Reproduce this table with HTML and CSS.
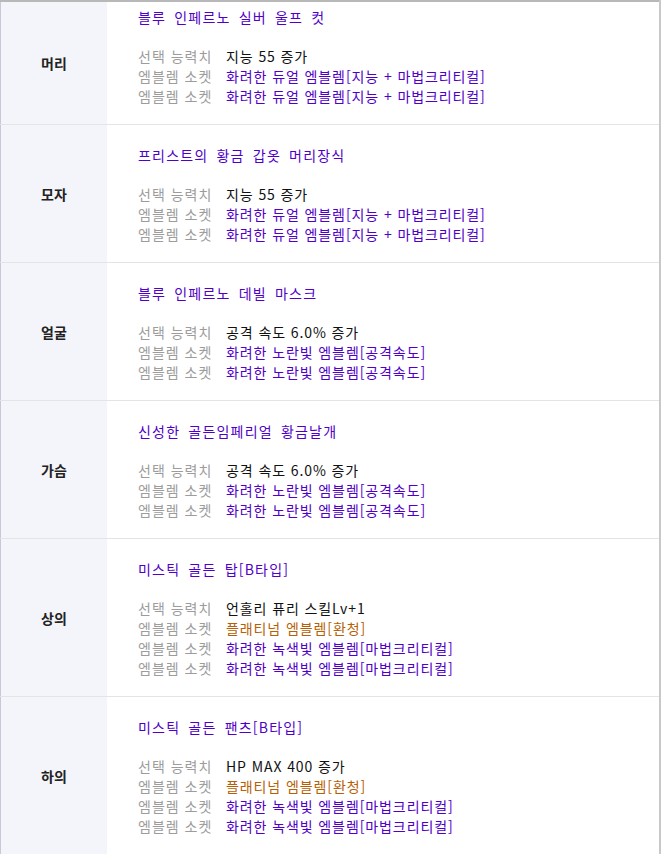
FILE: index.html
```html
<!DOCTYPE html>
<html lang="ko">
<head>
    <meta charset="UTF-8">
    <title>장비 옵션</title>
    <link rel="stylesheet" href="styles.css">
</head>
<body>
    <table class="equip">
        <tr class="first">
            <th>머리</th>
            <td>
                <div class="name">블루 인페르노 실버 울프 컷</div>
                <div class="opt"><span class="key">선택 능력치</span><span class="val">지능 55 증가</span></div>
                <div class="opt"><span class="key">엠블렘 소켓</span><span class="val purple">화려한 듀얼 엠블렘[지능 + 마법크리티컬]</span></div>
                <div class="opt"><span class="key">엠블렘 소켓</span><span class="val purple">화려한 듀얼 엠블렘[지능 + 마법크리티컬]</span></div>
            </td>
        </tr>
        <tr>
            <th>모자</th>
            <td>
                <div class="name">프리스트의 황금 갑옷 머리장식</div>
                <div class="opt"><span class="key">선택 능력치</span><span class="val">지능 55 증가</span></div>
                <div class="opt"><span class="key">엠블렘 소켓</span><span class="val purple">화려한 듀얼 엠블렘[지능 + 마법크리티컬]</span></div>
                <div class="opt"><span class="key">엠블렘 소켓</span><span class="val purple">화려한 듀얼 엠블렘[지능 + 마법크리티컬]</span></div>
            </td>
        </tr>
        <tr>
            <th>얼굴</th>
            <td>
                <div class="name">블루 인페르노 데빌 마스크</div>
                <div class="opt"><span class="key">선택 능력치</span><span class="val">공격 속도 6.0% 증가</span></div>
                <div class="opt"><span class="key">엠블렘 소켓</span><span class="val purple">화려한 노란빛 엠블렘[공격속도]</span></div>
                <div class="opt"><span class="key">엠블렘 소켓</span><span class="val purple">화려한 노란빛 엠블렘[공격속도]</span></div>
            </td>
        </tr>
        <tr>
            <th>가슴</th>
            <td>
                <div class="name">신성한 골든임페리얼 황금날개</div>
                <div class="opt"><span class="key">선택 능력치</span><span class="val">공격 속도 6.0% 증가</span></div>
                <div class="opt"><span class="key">엠블렘 소켓</span><span class="val purple">화려한 노란빛 엠블렘[공격속도]</span></div>
                <div class="opt"><span class="key">엠블렘 소켓</span><span class="val purple">화려한 노란빛 엠블렘[공격속도]</span></div>
            </td>
        </tr>
        <tr>
            <th>상의</th>
            <td>
                <div class="name">미스틱 골든 탑[B타입]</div>
                <div class="opt"><span class="key">선택 능력치</span><span class="val">언홀리 퓨리 스킬Lv+1</span></div>
                <div class="opt"><span class="key">엠블렘 소켓</span><span class="val orange">플래티넘 엠블렘[환청]</span></div>
                <div class="opt"><span class="key">엠블렘 소켓</span><span class="val purple">화려한 녹색빛 엠블렘[마법크리티컬]</span></div>
                <div class="opt"><span class="key">엠블렘 소켓</span><span class="val purple">화려한 녹색빛 엠블렘[마법크리티컬]</span></div>
            </td>
        </tr>
        <tr>
            <th>하의</th>
            <td>
                <div class="name">미스틱 골든 팬츠[B타입]</div>
                <div class="opt"><span class="key">선택 능력치</span><span class="val">HP MAX 400 증가</span></div>
                <div class="opt"><span class="key">엠블렘 소켓</span><span class="val orange">플래티넘 엠블렘[환청]</span></div>
                <div class="opt"><span class="key">엠블렘 소켓</span><span class="val purple">화려한 녹색빛 엠블렘[마법크리티컬]</span></div>
                <div class="opt"><span class="key">엠블렘 소켓</span><span class="val purple">화려한 녹색빛 엠블렘[마법크리티컬]</span></div>
            </td>
        </tr>
    </table>
</body>
</html>
```

FILE: styles.css
```css
body {
    margin: 0;
    background-color: #ffffff;
    font-family: "Noto Sans CJK KR", "Liberation Sans", sans-serif;
    font-size: 14px;
    color: #111;
}
.equip {
    width: 661px;
    border-collapse: collapse;
    border-top: 2px solid #b8b8b8;
    border-left: 1px solid #c8c9d6;
    border-right: 2px solid #c8c8c8;
}
.equip tr {
    border-bottom: 1px solid #e4e4e8;
}
.equip th {
    width: 106px;
    background-color: #f4f5fa;
    font-size: 14px;
    font-weight: bold;
    color: #222;
    text-align: center;
    vertical-align: middle;
    padding: 0;
}
.equip td {
    padding: 20px 0 18px 31px;
    vertical-align: top;
    line-height: 20px;
}
.equip tr.first td {
    padding-top: 5px;
}
.name {
    color: #5000c8;
    letter-spacing: 1.2px;
    word-spacing: 3px;
    margin-bottom: 19px;
}
.opt {
    display: flex;
    letter-spacing: 0.9px;
}
.key {
    width: 88px;
    flex: none;
    color: #9c9c9c;
    letter-spacing: 1px;
}
.val {
    color: #111;
}
.purple {
    color: #5000c8;
}
.orange {
    color: #b65f05;
}
```
